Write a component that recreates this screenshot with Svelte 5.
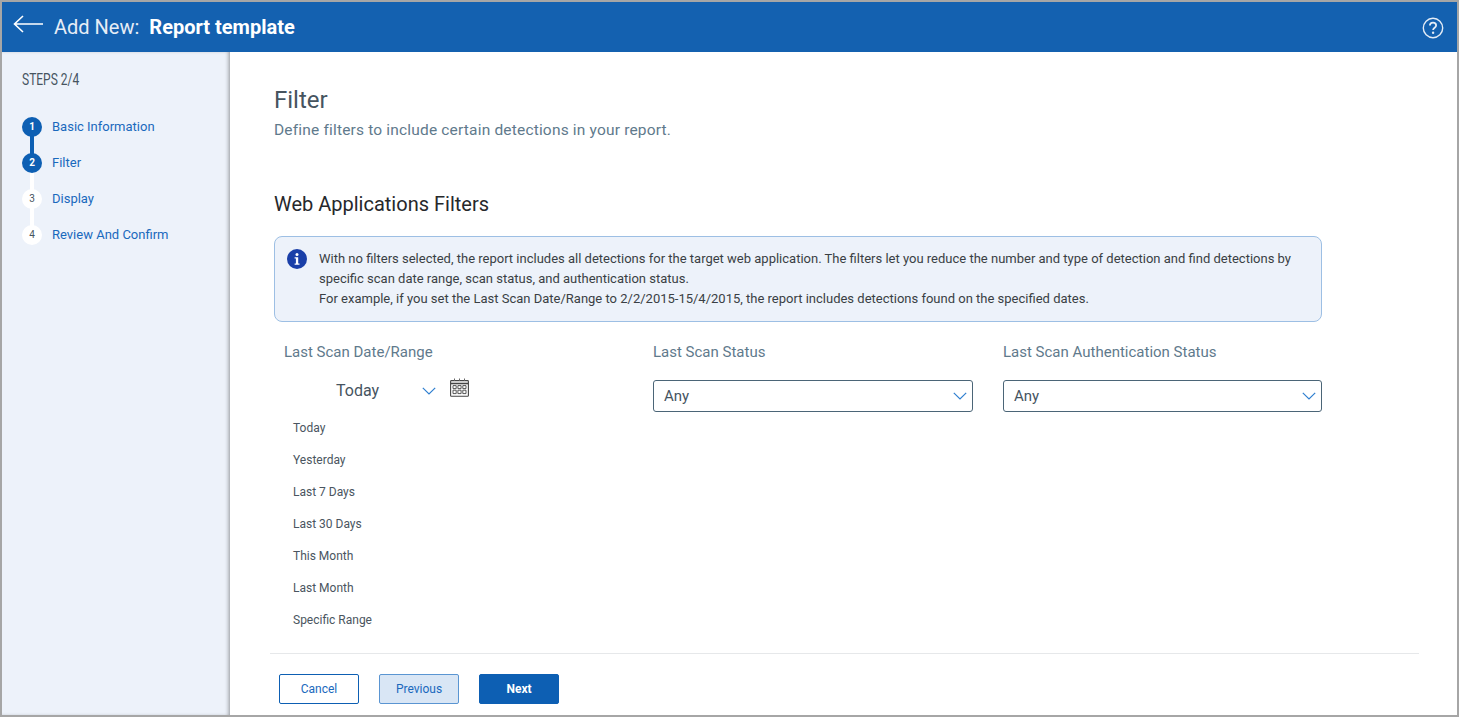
<script lang="ts">
    const steps = [
        { n: 1, label: "Basic Information", done: true },
        { n: 2, label: "Filter", done: true },
        { n: 3, label: "Display", done: false },
        { n: 4, label: "Review And Confirm", done: false },
    ];
    const ranges = ["Today", "Yesterday", "Last 7 Days", "Last 30 Days", "This Month", "Last Month", "Specific Range"];
    const selects = ["Last Scan Status", "Last Scan Authentication Status"];
</script>

<div class="frame">
    <header class="topbar">
        <svg class="back" width="32" height="20" viewBox="0 0 32 20" fill="none" stroke="#fff" stroke-width="1.6">
            <path d="M1.5 10H30M10 2L1.5 10l8.5 8" />
        </svg>
        <span class="add">Add New:</span>
        <strong class="tpl">Report template</strong>
        <svg class="help" width="22" height="22" viewBox="0 0 22 22" fill="none">
            <circle cx="11" cy="11" r="9.7" stroke="#e4ecf6" stroke-width="1.4" />
            <path d="M7.9 8.6c0-1.8 1.4-2.9 3.1-2.9s3.1 1.1 3.1 2.7c0 2.3-3 2.3-3 4.6" stroke="#e4ecf6" stroke-width="1.8" />
            <circle cx="11.1" cy="15.8" r="1.2" fill="#e4ecf6" />
        </svg>
    </header>

    <div class="body">
        <aside class="side">
            <div class="steps-title">STEPS 2/4</div>
            <ol class="steps">
                {#each steps as s, i}
                    <li class="step">
                        <span class="dot" class:on={s.done}>{s.n}</span>
                        {#if i < steps.length - 1}
                            <span class="link" class:on={s.done && steps[i + 1].done}></span>
                        {/if}
                        <span class="step-label">{s.label}</span>
                    </li>
                {/each}
            </ol>
        </aside>

        <main class="main">
            <div class="content">
                <h1>Filter</h1>
                <p class="sub">Define filters to include certain detections in your report.</p>
                <h2>Web Applications Filters</h2>

                <div class="info">
                    <svg class="info-icon" width="20" height="20" viewBox="0 0 20 20">
                        <circle cx="10" cy="10" r="10" fill="#1a3fa8" />
                        <circle cx="10" cy="5.4" r="1.5" fill="#fff" />
                        <path d="M7.6 8.2h3.6v6.2h1.3v1.4H7.6v-1.4h1.3V9.6H7.6z" fill="#fff" />
                    </svg>
                    <p>
                        With no filters selected, the report includes all detections for the target web application. The filters let you reduce the number and type of detection and find detections by specific scan date range, scan status, and authentication status.<br />
                        For example, if you set the Last Scan Date/Range to 2/2/2015-15/4/2015, the report includes detections found on the specified dates.
                    </p>
                </div>

                <div class="filters">
                    <div class="col date-col">
                        <div class="col-label">Last Scan Date/Range</div>
                        <div class="date-pick">
                            <span class="date-val">Today</span>
                            <svg class="chev" width="14" height="8" viewBox="0 0 14 8" fill="none" stroke="#2f7fd0" stroke-width="1.2"><path d="M.8.8L7 7l6.2-6.2" /></svg>
                            <svg class="cal" width="19" height="19" viewBox="0 0 19 19" fill="none">
                                <rect x=".6" y="2.6" width="17.8" height="15.6" rx=".8" stroke="#444" stroke-width="1.1" />
                                <path d="M.6 5.5h17.8" stroke="#444" stroke-width="1.6" />
                                <path d="M4.5.5v2.4M9.5.5v2.4M14.5.5v2.4" stroke="#666" stroke-width="1" />
                                <path d="M3 7.6h3.2v3H3zM7.9 7.6h3.2v3H7.9zM12.8 7.6H16v3h-3.2zM3 12.2h3.2v3.4H3zM7.9 12.2h3.2v3.4H7.9zM12.8 12.2H16v3.4h-3.2z" stroke="#444" stroke-width=".9" />
                            </svg>
                        </div>
                        <ul class="ranges">
                            {#each ranges as r}
                                <li>{r}</li>
                            {/each}
                        </ul>
                    </div>
                    {#each selects as label}
                        <div class="col">
                            <div class="col-label">{label}</div>
                            <div class="select">
                                <span>Any</span>
                                <svg width="14" height="8" viewBox="0 0 14 8" fill="none" stroke="#2f7fd0" stroke-width="1.2"><path d="M.8.8L7 7l6.2-6.2" /></svg>
                            </div>
                        </div>
                    {/each}
                </div>
            </div>

            <footer class="actions">
                <button class="btn cancel">Cancel</button>
                <button class="btn prev">Previous</button>
                <button class="btn next">Next</button>
            </footer>
        </main>
    </div>
</div>

<style>
    :global(body) {
        margin: 0;
        font-family: Roboto, "Liberation Sans", sans-serif;
    }

    .frame {
        box-sizing: border-box;
        width: 1459px;
        height: 717px;
        border: 2px solid #a6a6a6;
        display: flex;
        flex-direction: column;
        overflow: hidden;
    }

    .topbar {
        height: 50px;
        flex: none;
        background: #1461b0;
        display: flex;
        align-items: center;
        padding: 0 13px 0 11px;
        color: #fff;
        font-size: 20px;
    }

    .back {
        margin: -6px 9px 0 0;
    }

    .add {
        color: #e6edf6;
        margin-right: 10px;
    }

    .tpl {
        font-weight: 700;
    }

    .help {
        margin: 2px 0 0 auto;
    }

    .body {
        flex: 1;
        display: flex;
        min-height: 0;
    }

    .side {
        width: 208px;
        flex: none;
        background: #edf2fa;
        box-shadow: inset -3px 0 4px -2px rgba(0, 0, 0, 0.4);
        padding: 20px 0 0 20px;
    }

    .steps-title {
        font-family: Roboto, sans-serif;
        font-size: 16px;
        line-height: 16px;
        color: #46545f;
        transform: scaleX(0.75);
        transform-origin: left;
    }

    .steps {
        list-style: none;
        margin: 29px 0 0;
        padding: 0;
    }

    .step {
        position: relative;
        height: 36px;
        display: flex;
        align-items: flex-start;
    }

    .dot {
        width: 20px;
        height: 20px;
        border-radius: 50%;
        background: #fff;
        color: #46545f;
        font-size: 10px;
        line-height: 20px;
        text-align: center;
        flex: none;
        position: relative;
        z-index: 1;
    }

    .dot.on {
        background: #0d5fb3;
        color: #fff;
        font-weight: 700;
    }

    .link {
        position: absolute;
        left: 8px;
        top: 16px;
        width: 4px;
        height: 26px;
        background: #fff;
    }

    .link.on {
        background: #0d5fb3;
    }

    .step-label {
        margin-left: 10px;
        font-size: 13px;
        line-height: 19px;
        color: #1a69bd;
    }

    .main {
        flex: 1;
        min-width: 0;
        display: flex;
        flex-direction: column;
        background: #fff;
        padding-left: 40px;
    }

    .content {
        flex: 1;
        padding-left: 4px;
        width: 1048px;
    }

    h1 {
        margin: 34px 0 0;
        font-size: 24px;
        line-height: 28px;
        font-weight: 400;
        color: #46545f;
    }

    .sub {
        margin: 6px 0 0;
        font-size: 15.5px;
        line-height: 20px;
        color: #5f7a8c;
        letter-spacing: 0.18px;
    }

    h2 {
        margin: 51px 0 0;
        font-size: 20px;
        line-height: 26px;
        font-weight: 400;
        color: #26282b;
    }

    .info {
        box-sizing: border-box;
        margin-top: 19px;
        height: 86px;
        background: #edf2fa;
        border: 1px solid #9dbfe4;
        border-radius: 8px;
        display: flex;
        padding: 12px 20px 0 12px;
    }

    .info-icon {
        flex: none;
        margin-right: 12px;
    }

    .info p {
        margin: 0;
        font-size: 13px;
        line-height: 20px;
        color: #3a3f44;
    }

    .filters {
        display: grid;
        grid-template-columns: 349px 320px 319px;
        column-gap: 30px;
        margin-top: 20px;
    }

    .col-label {
        font-size: 15px;
        line-height: 20px;
        color: #5f7a8c;
    }

    .date-col .col-label {
        margin-left: 10px;
    }

    .date-pick {
        height: 32px;
        margin-top: 12px;
        display: flex;
        align-items: center;
        padding-left: 62px;
    }

    .date-val {
        width: 86px;
        font-size: 16px;
        color: #46545f;
    }

    .chev {
        margin-top: 2px;
    }

    .cal {
        margin: -6px 0 0 14px;
    }

    .ranges {
        list-style: none;
        margin: 6px 0 0;
        padding: 0 0 0 19px;
        font-size: 12px;
        color: #4a5560;
    }

    .ranges li {
        height: 32px;
        line-height: 32px;
    }

    .select {
        box-sizing: border-box;
        height: 32px;
        margin-top: 18px;
        border: 1px solid #4b6577;
        border-radius: 3px;
        display: flex;
        align-items: center;
        justify-content: space-between;
        padding: 0 5px 0 10px;
        font-size: 15px;
        color: #46545f;
    }

    .actions {
        flex: none;
        margin-right: 38px;
        height: 41px;
        border-top: 1px solid #e6e8ea;
        display: flex;
        align-items: flex-start;
        gap: 20px;
        padding: 20px 0 0 9px;
    }

    .btn {
        width: 80px;
        height: 30px;
        border-radius: 2px;
        font-family: inherit;
        font-size: 12px;
        padding: 0;
        box-sizing: border-box;
    }

    .cancel {
        background: #fff;
        border: 1px solid #0d5fb3;
        color: #1a69bd;
    }

    .prev {
        background: #d9e6f5;
        border: 1px solid #5a95d2;
        color: #1a69bd;
    }

    .next {
        background: #0d5fb3;
        border: 1px solid #0d5fb3;
        color: #fff;
        font-weight: 700;
    }
</style>
